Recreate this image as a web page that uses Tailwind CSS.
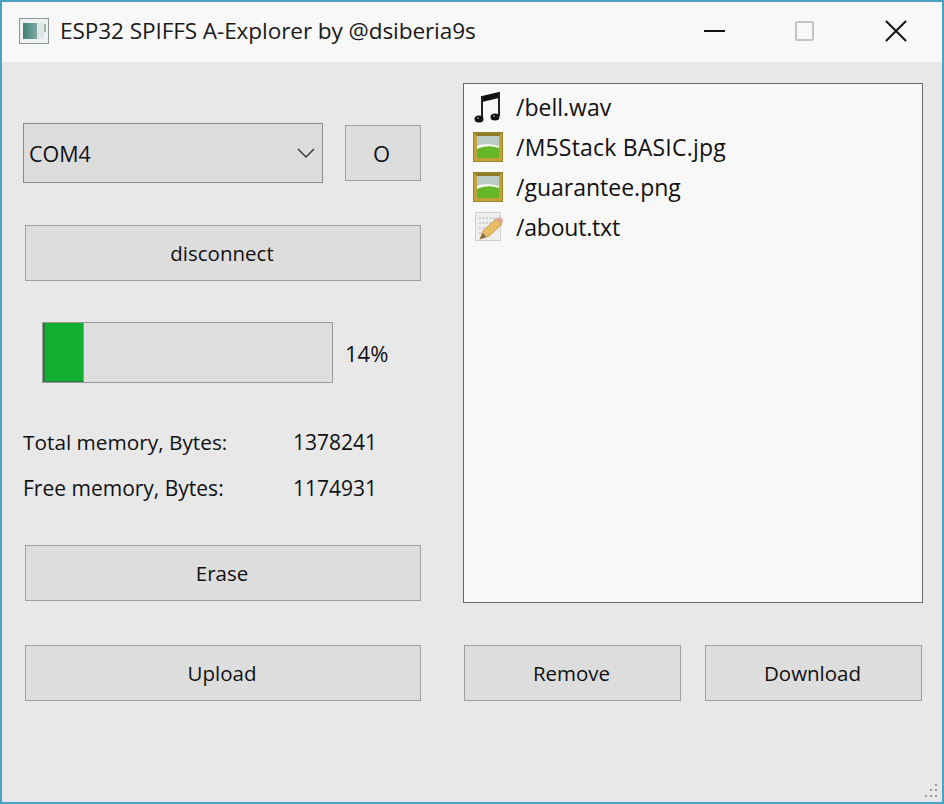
<!DOCTYPE html>
<html>
<head>
<meta charset="utf-8">
<script src="https://cdn.jsdelivr.net/npm/@tailwindcss/browser@4"></script>
</head>
<body class="m-0 bg-[#e8e8e8]">
<div class="w-[944px] h-[804px] overflow-hidden relative flex flex-col bg-[#e8e8e8] border-2 border-[#4aa3c4] font-['Open_Sans','Noto_Sans',sans-serif] text-[#111] text-[20.5px]">
  <!-- title bar -->
  <div class="h-[60px] shrink-0 bg-[#f8f8f8] flex items-center">
    <svg class="ml-[17px] mt-[-2px]" width="30" height="26" viewBox="0 0 30 26">
      <defs><linearGradient id="tg" x1="0" y1="0" x2="1" y2="0"><stop offset="0" stop-color="#3f8478"/><stop offset="1" stop-color="#7fa8a4"/></linearGradient></defs>
      <rect x="0.5" y="0.5" width="29" height="25" fill="#eef2f2" stroke="#8a9696"/>
      <rect x="4" y="5" width="14" height="16" fill="url(#tg)"/>
      <rect x="18" y="5" width="7" height="16" fill="#dfe6e6"/>
      <rect x="25" y="6" width="2" height="8" fill="#a9b5b5"/>
    </svg>
    <span class="ml-[11px] mt-[-2px] text-[22.6px] tracking-[-0.1px] text-[#1a1a1a] whitespace-nowrap">ESP32 SPIFFS A-Explorer by @dsiberia9s</span>
    <div class="ml-auto flex items-center mt-[-2px]">
      <div class="w-[21px] h-[2px] bg-[#111]"></div>
      <div class="ml-[70px] w-[19px] h-[20px] border-2 border-[#c4c4c4] rounded-[2px]"></div>
      <svg class="ml-[71px] mr-[35px]" width="22" height="22" viewBox="0 0 22 22"><path d="M1 1 L21 21 M21 1 L1 21" stroke="#111" stroke-width="2"/></svg>
    </div>
  </div>
  <!-- content -->
  <div class="flex pl-[21px]">
    <!-- left column -->
    <div class="w-[398px] shrink-0 pt-[61px] flex flex-col">
      <div class="flex items-center h-[60px]">
        <div class="w-[300px] h-[60px] flex items-center justify-between pl-[5px] pr-[7px] bg-[#dcdcdc] border border-[#8a8a8a] text-[21.5px]">
          <span class="mt-[2px]">COM4</span>
          <svg width="18" height="11" viewBox="0 0 18 11"><path d="M1 1 L9 9 L17 1" fill="none" stroke="#333" stroke-width="1.4"/></svg>
        </div>
        <div class="ml-[22px] w-[76px] h-[56px] flex items-center justify-center pr-[3px] bg-[#dddddd] border border-[#a0a0a0] text-[22px]">O</div>
      </div>
      <div class="ml-[2px] mt-[42px] h-[56px] flex items-center justify-center pr-[2px] bg-[#dddddd] border border-[#a0a0a0]">disconnect</div>
      <div class="mt-[41px] flex items-center h-[61px]">
        <div class="ml-[19px] w-[291px] h-[61px] bg-[#dedede] border border-[#9a9a9a] flex">
          <div class="w-[41px] bg-[#12b032] border-r border-r-[#4fc56a] border-l-2 border-l-[#2a7a3c] border-b border-b-[#2a7a3c]"></div>
        </div>
        <span class="ml-[12px] mt-[2px] text-[22px]">14%</span>
      </div>
      <div class="mt-[45px] flex items-center h-[30px] text-[20.8px] whitespace-nowrap">
        <span class="w-[270px]">Total memory, Bytes:</span><span class="text-[21px]">1378241</span>
      </div>
      <div class="mt-[16px] flex items-center h-[30px] text-[21px] whitespace-nowrap">
        <span class="w-[270px]">Free memory, Bytes:</span><span>1174931</span>
      </div>
      <div class="ml-[2px] mt-[41px] h-[56px] flex items-center justify-center pr-[2px] bg-[#dddddd] border border-[#a0a0a0]">Erase</div>
      <div class="ml-[2px] mt-[44px] h-[56px] flex items-center justify-center pr-[2px] bg-[#dddddd] border border-[#a0a0a0]">Upload</div>
    </div>
    <!-- right column -->
    <div class="ml-[42px] w-[460px] shrink-0 pt-[21px] flex flex-col">
      <div class="h-[520px] bg-[#f8f8f8] border border-[#6a6a6a] pt-[3px] pl-[9px] text-[23px]">
        <div class="h-[40px] flex items-center">
          <svg width="32" height="34" viewBox="0 0 32 34"><path d="M9 6 L26 2 V8 L9 12 Z" fill="#111"/><path d="M9 6 V29 M26 2 V26" stroke="#222" stroke-width="2" fill="none"/><ellipse cx="6" cy="29" rx="4.5" ry="3.5" fill="#111"/><ellipse cx="22" cy="27" rx="4.5" ry="3.5" fill="#111"/><circle cx="5" cy="28" r="1" fill="#888"/><circle cx="21" cy="26" r="1" fill="#888"/></svg>
          <span class="ml-[11px]">/bell.wav</span>
        </div>
        <div class="h-[40px] flex items-center">
          <svg width="32" height="32" viewBox="0 0 32 32"><rect x="0" y="1" width="30" height="30" fill="#c2a43a"/><path d="M0 1 H30 L26 5 H4 Z" fill="#8f7a2c"/><rect x="0.5" y="1.5" width="29" height="29" fill="none" stroke="#9a8428"/><rect x="4" y="5" width="22" height="22" fill="#b9cdc6"/><path d="M4 15 Q12 11 26 15 V27 H4 Z" fill="#f4f7ea"/><path d="M4 18 Q14 13 26 17 V27 H4 Z" fill="#66b62c"/></svg>
          <span class="ml-[11px] tracking-[0.2px]">/M5Stack BASIC.jpg</span>
        </div>
        <div class="h-[40px] flex items-center">
          <svg width="32" height="32" viewBox="0 0 32 32"><rect x="0" y="1" width="30" height="30" fill="#c2a43a"/><path d="M0 1 H30 L26 5 H4 Z" fill="#8f7a2c"/><rect x="0.5" y="1.5" width="29" height="29" fill="none" stroke="#9a8428"/><rect x="4" y="5" width="22" height="22" fill="#b9cdc6"/><path d="M4 15 Q12 11 26 15 V27 H4 Z" fill="#f4f7ea"/><path d="M4 18 Q14 13 26 17 V27 H4 Z" fill="#66b62c"/></svg>
          <span class="ml-[11px]">/guarantee.png</span>
        </div>
        <div class="h-[40px] flex items-center">
          <svg width="32" height="32" viewBox="0 0 32 32"><rect x="2.5" y="1.5" width="25" height="28" fill="#eeeeec" stroke="#d0d0d0"/><path d="M6 7 H24 M6 12 H20 M6 17 H12 M6 22 H9" stroke="#c2c2cc" stroke-width="1.5" stroke-dasharray="2 1.5"/><path d="M7 28 L10 20 L23 8 L29 13 L16 25 Z" fill="#e6bd62" stroke="#c29a48"/><path d="M23 8 L29 13 L30 9 L27 6 Z" fill="#dfa0a0"/><path d="M7 28 L10 22 L13 26 Z" fill="#7a6a4a"/></svg>
          <span class="ml-[11px] tracking-[-0.2px]">/about.txt</span>
        </div>
      </div>
      <div class="mt-[42px] ml-[1px] flex gap-[24px]">
        <div class="w-[217px] h-[56px] flex items-center justify-center pr-[2px] bg-[#dddddd] border border-[#a0a0a0]">Remove</div>
        <div class="w-[217px] h-[56px] flex items-center justify-center pr-[2px] bg-[#dddddd] border border-[#a0a0a0]">Download</div>
      </div>
    </div>
  </div>
  <!-- resize grip -->
  <svg class="absolute right-[3px] bottom-[3px]" width="16" height="16" viewBox="0 0 16 16" fill="#999"><rect x="12" y="1" width="2" height="2"/><rect x="7" y="6" width="2" height="2"/><rect x="12" y="6" width="2" height="2"/><rect x="2" y="12" width="2" height="2"/><rect x="7" y="12" width="2" height="2"/><rect x="12" y="12" width="2" height="2"/></svg>
</div>
</body>
</html>
